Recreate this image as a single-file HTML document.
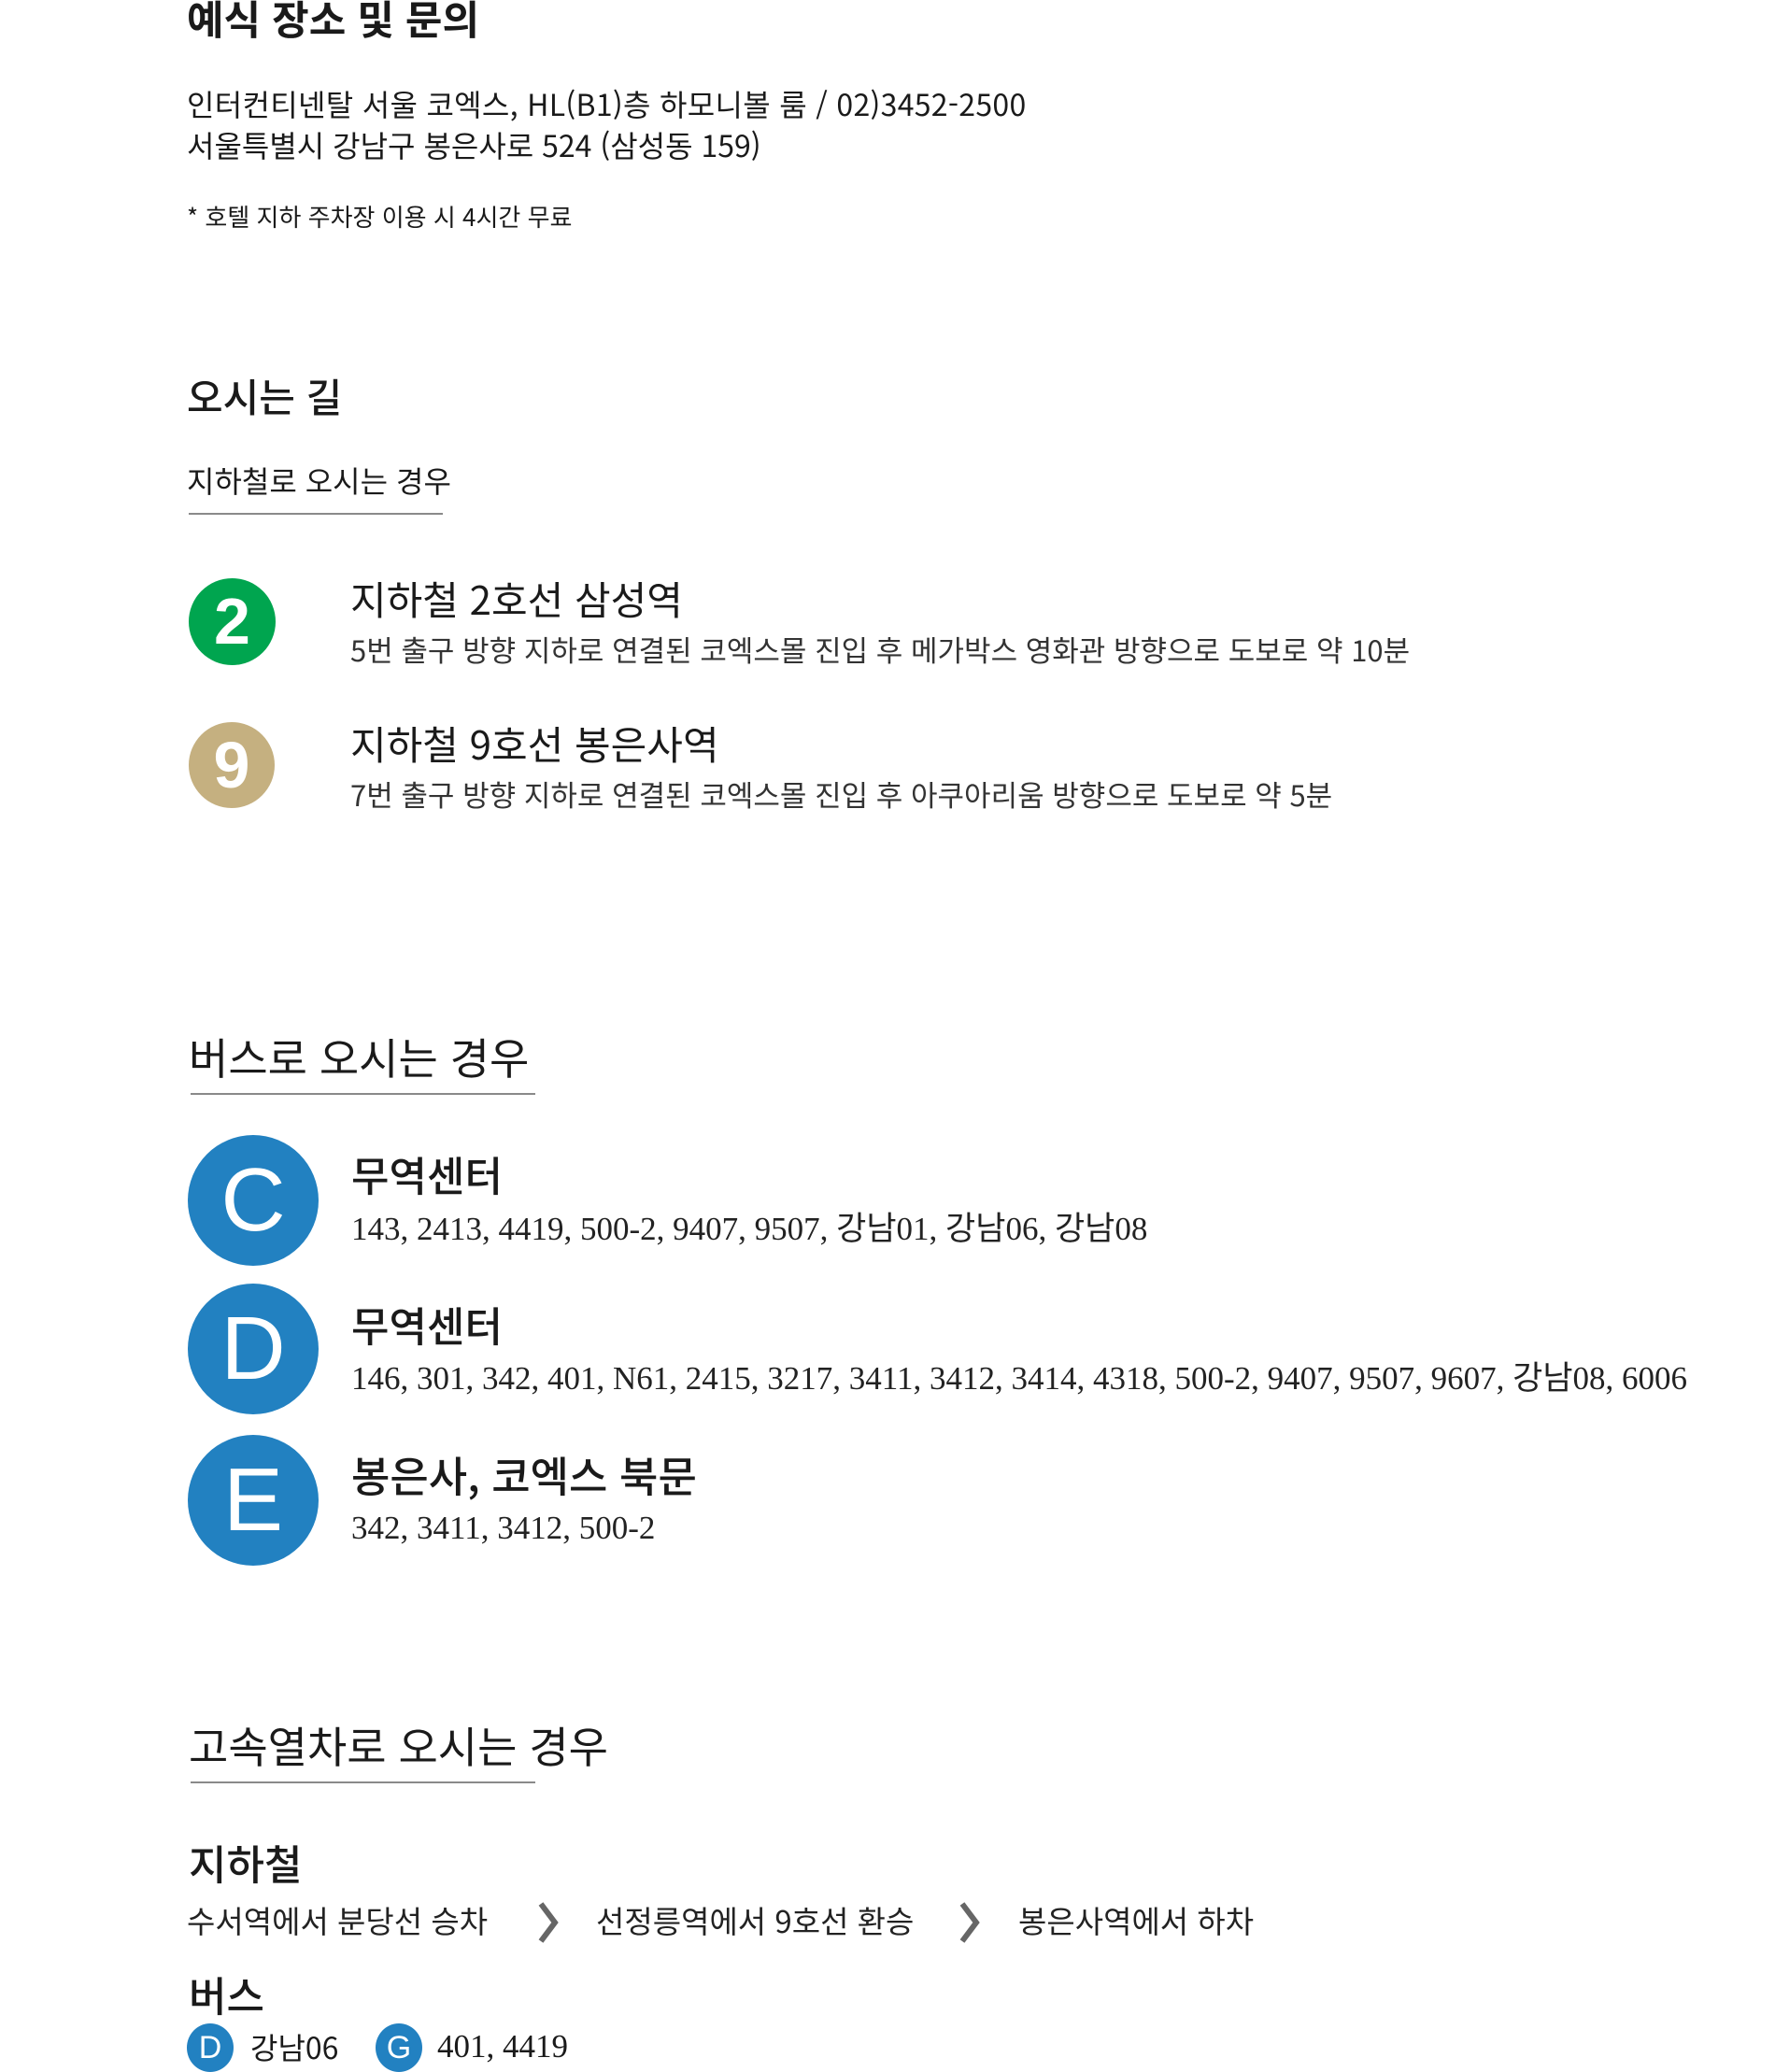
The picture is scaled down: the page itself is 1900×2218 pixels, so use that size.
<!DOCTYPE html>
<html lang="ko"><head><meta charset="utf-8">
<style>
html,body{margin:0;padding:0;background:#fff;}
body{width:1900px;height:2217px;position:relative;overflow:hidden;color:#1a1a1a;font-family:"Liberation Sans","Noto Sans CJK KR",sans-serif;}
.a{position:absolute;white-space:nowrap;line-height:1;}
.k{font-family:"Noto Sans CJK KR","Liberation Sans",sans-serif;}
.s{font-family:"Liberation Serif","Noto Sans CJK KR",serif;}
.c{position:absolute;border-radius:50%;color:#fff;text-align:center;font-family:"Liberation Sans","Noto Sans CJK KR",sans-serif;}
.line{position:absolute;height:2px;background:#8a8a8a;}
</style></head><body>

<div class="a k" style="left:200px;top:-2px;font-size:43px;font-weight:700;">예식 장소 및 문의</div>
<div class="a k" style="left:200px;top:95px;font-size:32px;letter-spacing:0.3px;">인터컨티넨탈 서울 코엑스, HL(B1)층 하모니볼 룸 / 02)3452-2500</div>
<div class="a k" style="left:200px;top:139px;font-size:32px;">서울특별시 강남구 봉은사로 524 (삼성동 159)</div>
<div class="a k" style="left:200px;top:219px;font-size:26px;">* 호텔 지하 주차장 이용 시 4시간 무료</div>

<div class="a k" style="left:200px;top:403px;font-size:42px;font-weight:500;">오시는 길</div>
<div class="a k" style="left:200px;top:498px;font-size:32px;">지하철로 오시는 경우</div>
<div class="line" style="left:202px;top:549px;width:272px;"></div>

<div class="c" style="left:202px;top:619px;width:93px;height:93px;background:#00a54f;font-size:70px;font-weight:700;line-height:93px;">2</div>
<div class="a k" style="left:375px;top:620px;font-size:42px;">지하철 2호선 삼성역</div>
<div class="a k" style="left:375px;top:679px;font-size:31px;color:#333;">5번 출구 방향 지하로 연결된 코엑스몰 진입 후 메가박스 영화관 방향으로 도보로 약 10분</div>

<div class="c" style="left:202px;top:773px;width:92px;height:92px;background:#c5b080;font-size:70px;font-weight:700;line-height:92px;">9</div>
<div class="a k" style="left:375px;top:775px;font-size:42px;">지하철 9호선 봉은사역</div>
<div class="a k" style="left:375px;top:834px;font-size:31px;color:#333;">7번 출구 방향 지하로 연결된 코엑스몰 진입 후 아쿠아리움 방향으로 도보로 약 5분</div>

<div class="a k" style="left:202px;top:1108px;font-size:46px;">버스로 오시는 경우</div>
<div class="line" style="left:204px;top:1170px;width:369px;"></div>

<div class="c" style="left:201px;top:1215px;width:140px;height:140px;background:#2281c1;font-size:96px;line-height:140px;">C</div>
<div class="a k" style="left:376px;top:1234px;font-size:44px;font-weight:500;">무역센터</div>
<div class="a s" style="left:376px;top:1298px;font-size:35px;color:#222;">143, 2413, 4419, 500-2, 9407, 9507, 강남01, 강남06, 강남08</div>

<div class="c" style="left:201px;top:1374px;width:140px;height:140px;background:#2281c1;font-size:96px;line-height:140px;">D</div>
<div class="a k" style="left:376px;top:1395px;font-size:44px;font-weight:500;">무역센터</div>
<div class="a s" style="left:376px;top:1458px;font-size:35px;color:#222;">146, 301, 342, 401, N61, 2415, 3217, 3411, 3412, 3414, 4318, 500-2, 9407, 9507, 9607, 강남08, 6006</div>

<div class="c" style="left:201px;top:1536px;width:140px;height:140px;background:#2281c1;font-size:96px;line-height:140px;">E</div>
<div class="a k" style="left:376px;top:1555px;font-size:45px;font-weight:500;">봉은사, 코엑스 북문</div>
<div class="a s" style="left:376px;top:1618px;font-size:35px;color:#222;">342, 3411, 3412, 500-2</div>

<div class="a k" style="left:202px;top:1845px;font-size:46px;">고속열차로 오시는 경우</div>
<div class="line" style="left:204px;top:1907px;width:369px;"></div>

<div class="a k" style="left:202px;top:1971px;font-size:44px;font-weight:500;">지하철</div>
<div class="a k" style="left:200px;top:2039px;font-size:33px;color:#222;">수서역에서 분당선 승차</div>
<svg style="position:absolute;left:574px;top:2035px" width="26" height="46" viewBox="0 0 26 46"><path d="M5 3 L20 23 L5 43" fill="none" stroke="#666" stroke-width="6"/></svg>
<div class="a k" style="left:638px;top:2039px;font-size:33px;color:#222;">선정릉역에서 9호선 환승</div>
<svg style="position:absolute;left:1025px;top:2035px" width="26" height="46" viewBox="0 0 26 46"><path d="M5 3 L20 23 L5 43" fill="none" stroke="#666" stroke-width="6"/></svg>
<div class="a k" style="left:1090px;top:2039px;font-size:33px;color:#222;">봉은사역에서 하차</div>

<div class="a k" style="left:202px;top:2112px;font-size:44px;font-weight:500;">버스</div>
<div class="c" style="left:200px;top:2166px;width:50px;height:52px;background:#2281c1;font-size:34px;line-height:52px;">D</div>
<div class="a k" style="left:268px;top:2175px;font-size:32px;">강남06</div>
<div class="c" style="left:402px;top:2166px;width:50px;height:52px;background:#2281c1;font-size:34px;line-height:52px;">G</div>
<div class="a s" style="left:468px;top:2173px;font-size:35px;">401, 4419</div>

</body></html>
